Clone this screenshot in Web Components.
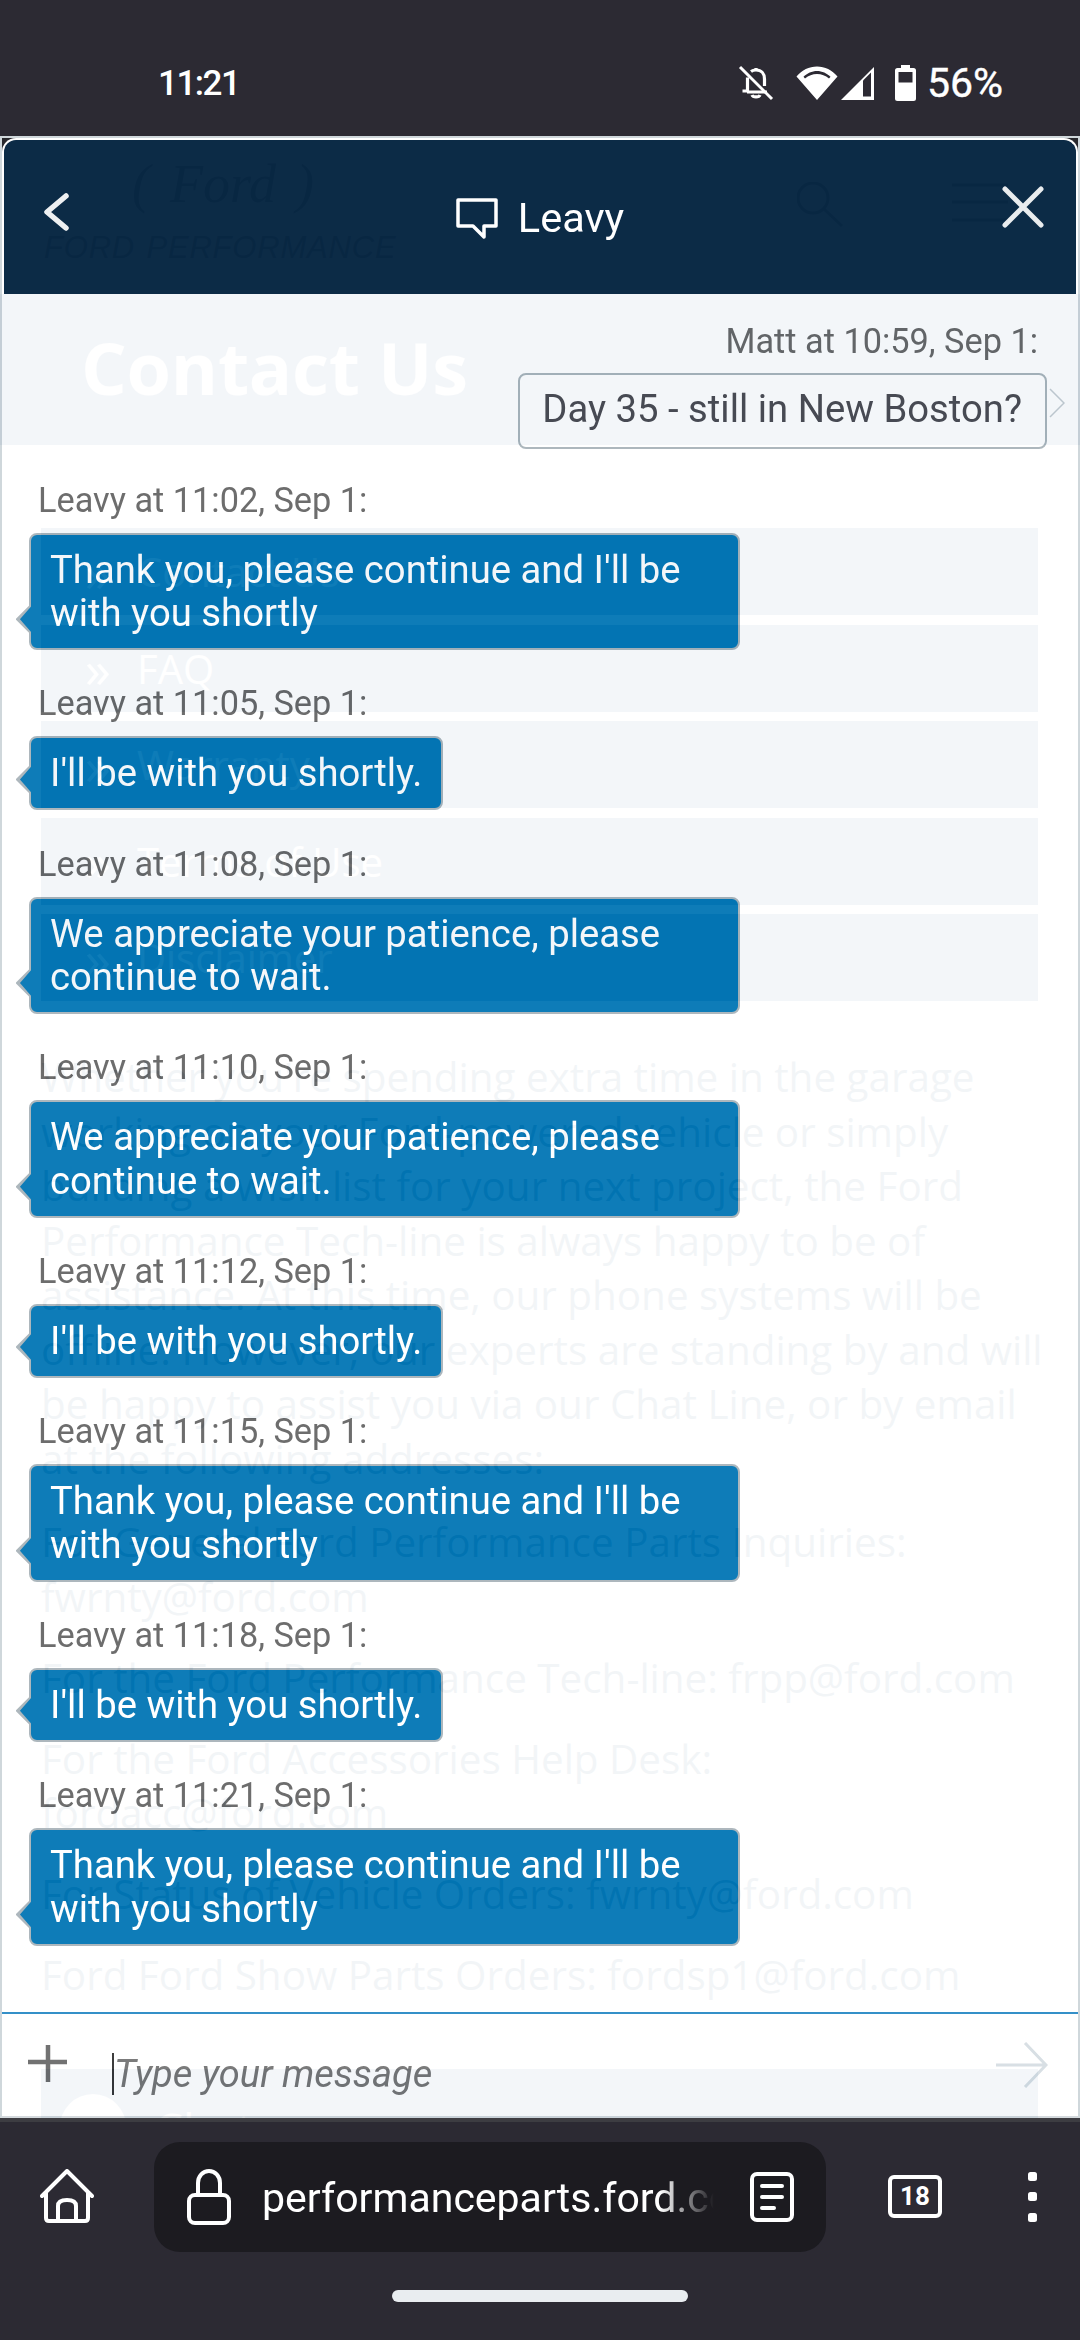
<!DOCTYPE html>
<html><head><meta charset="utf-8">
<style>
html,body{margin:0;padding:0;background:#2c2a33}
</style></head>
<body>
<phone-app></phone-app>
<script>
function def(name, css, html){
  customElements.define(name, class extends HTMLElement{
    constructor(){super();const r=this.attachShadow({mode:'open'});
      r.innerHTML='<style>'+css+'</style>'+(typeof html==='function'?html(this):html);}
  });
}
def('status-bar',`
:host{display:flex;align-items:center;height:136px;box-sizing:border-box;padding:30px 77px 0 158px;background:#2c2a33;color:#fff;font-family:Roboto,sans-serif}
.t{font-size:35px;font-weight:500;flex:1;letter-spacing:-1.500px}
.i{display:flex;align-items:center}
svg{display:block}
.p{font-size:41px;font-weight:400;margin-left:11px;letter-spacing:0;-webkit-text-stroke:.4px #fff}
`,`<span class="t">11:21</span><div class="i">
<svg width="36" height="36" viewBox="0 0 36 36" fill="none" stroke="#fff" stroke-width="3.200"><path d="M18 3v3"/><path d="M9.500 12.500V26H4.500M13 6.500c1.300-1 3-1.500 5-1.500 5.500 0 8.500 4 8.500 9v7"/><path d="M9 27h20M14 30c1 2.500 7 2.500 8 0" /><path d="M2 2 34 34" stroke-width="3"/></svg>
<svg style="margin-left:22px" width="42" height="34" viewBox="0 0 42 34" fill="#fff"><path d="M21 34 .5 10.500C6 4 13 .5 21 .5s15 3.500 20.500 10L21 34ZM7.500 10.800 9 12.500C12.500 9.500 16.500 8 21 8s8.500 1.500 12 4.500l1.500-1.700C31 7.400 26 5 21 5S11 7.400 7.500 10.800Z" fill-rule="evenodd"/></svg>
<svg style="margin-left:3px" width="34" height="33" viewBox="0 0 34 33"><path d="M33 0V33H0Z" fill="#fff"/><path d="M22 13.500V29.500H30V5.500Z" fill="#2c2a33"/></svg>
<svg style="margin-left:20px" width="21" height="36" viewBox="0 0 21 36"><path d="M6 0h9v3h3.500A2.500 2.500 0 0 1 21 5.500V33.500A2.500 2.500 0 0 1 18.500 36H2.500A2.500 2.500 0 0 1 0 33.500V5.500A2.500 2.500 0 0 1 2.500 3H6Z" fill="#fff"/><rect x="3.500" y="7" width="14" height="10.500" fill="#2c2a33"/></svg>
<span class="p">56%</span></div>`);

def('page-row',`
:host{display:flex;align-items:center;height:87px;margin:0 42px 9.500px 41px;background:rgb(30,90,150);color:#fff;font:40px "Open Sans",sans-serif}
b{font-weight:400;width:52px;padding-left:44px;font-size:52px;line-height:40px}
`,`<b>»</b><slot></slot>`);

def('page-under',`
:host{display:block;height:100%;background:#fff;font-family:"Open Sans",sans-serif;color:rgb(0,60,110);overflow:hidden}
.hd{height:158px;box-sizing:border-box;position:relative;display:flex;padding:28px 0 0 44px;color:#aaa}
.logo{font:italic 54px "Liberation Serif",serif;display:flex;align-items:center;height:40px;gap:20px;margin-left:88px}
.perf{font:italic 400 31px "Liberation Sans",sans-serif;margin-top:78px;position:absolute;left:44px;top:16px;letter-spacing:.8px;word-spacing:2px}
.sr{position:absolute;left:797px;top:46px}
.hero{height:151px;background:rgb(30,90,150);color:#fff;font-size:72px;font-weight:700;box-sizing:border-box;padding:38px 0 0 81px;line-height:70px;margin-bottom:83px;letter-spacing:-.3px}
.txt{margin:26.500px 42px 0 41px;font-size:40.400px;line-height:54.500px;white-space:nowrap}
.chat{margin:66px 42px 0 41px;height:100px;background:rgb(30,90,150);display:flex;color:#fff;font-size:46px;padding:25px 0 0 19px;gap:28px;line-height:70px}
.c{width:66px;height:66px;border-radius:50%;background:#fff}
`,`<div class="hd"><div class="logo"><span>(</span><span>Ford</span><span>)</span></div><div class="perf">FORD PERFORMANCE</div>
<svg class="sr" height="50" viewBox="0 0 220 50" fill="none" stroke="#aaa" stroke-width="3" style="width:220px"><circle cx="16" cy="16" r="15"/><path d="M27 27 45 44"/><path d="M155 3h56M155 20h56M155 38h56"/></svg></div>
<div class="hero">Contact Us</div>
<page-row>Contact Us</page-row><page-row>FAQ</page-row><page-row>Warranty</page-row><page-row>Terms of Use</page-row><page-row>Disclaimer</page-row>
<div class="txt" style="margin-top:49px">Whether you're spending extra time in the garage<br>working on your Ford-powered vehicle or simply<br>building a wish list for your next project, the Ford<br>Performance Tech-line is always happy to be of<br>assistance. At this time, our phone systems will be<br>offline. However, our experts are standing by and will<br>be happy to assist you via our Chat Line, or by email<br>at the following addresses:</div>
<div class="txt" style="margin-top:29px">For General Ford Performance Parts Inquiries:<br>fwrnty@ford.com</div>
<div class="txt">For the Ford Performance Tech-line: frpp@ford.com</div>
<div class="txt">For the Ford Accessories Help Desk:<br>fordacc@ford.com</div>
<div class="txt">For Status of Vehicle Orders: fwrnty@ford.com</div>
<div class="txt">Ford Ford Show Parts Orders: fordsp1@ford.com</div>
<div class="chat"><div class="c"></div><span>Chat</span></div>`);

def('chat-msg',`
:host{display:block;font-family:Roboto,sans-serif}
:host([me]){margin-bottom:-2.500px}
.l{font-size:34.300px;line-height:38px;color:#666;margin-left:36px;height:38px}
.b{position:relative;box-sizing:border-box;margin:14px 0 0 27px;width:fit-content;background:#0276b5;color:#fff;font-size:38.250px;line-height:43.500px;padding:14px 19px 12.500px 19px;border:2px solid #a9b4ba;border-radius:8px;max-width:711px}
.b::after{content:"";position:absolute;left:-15.500px;bottom:13.500px;width:15.500px;height:31px;background:#a9b4ba;clip-path:polygon(100% 0,0 50%,100% 100%)}
.b::before{content:"";position:absolute;z-index:1;left:-13px;bottom:14px;width:15px;height:30px;background:#0276b5;clip-path:polygon(100% 0,13% 50%,100% 100%)}
:host([me]) .l{text-align:right;margin:0 40px 0 0}
:host([me]) .b{background:#fff;color:#4a4a50;margin:13px 31px 0 auto;padding:13px 23px 15.500px 22px;max-width:none}
:host([me]) .b::before,:host([me]) .b::after{display:none}
:host([me]) svg{position:absolute;right:-20px;top:13px}
`,h=>`<div class="l">${h.getAttribute('who')}</div><div class="b"><slot></slot>${h.hasAttribute('me')?'<svg width="16" height="30" viewBox="0 0 16 30" fill="none" stroke="#c4ccd1" stroke-width="1.500"><path d="M1 1 15 15 1 29"/></svg>':''}</div>`);

def('chat-head',`
:host{display:block;background:#1d1d22}
.h{height:156px;background:#00203d;border-top:2px solid #fff;border-left:2px solid #fff;border-right:2px solid #fff;border-radius:14px 14px 0 0;box-sizing:border-box;position:relative;display:flex;justify-content:center;color:#fff;font:41.500px Roboto,sans-serif}
.m{display:flex;align-items:flex-start;padding-top:54px;gap:20px}
.bk{position:absolute;left:38px;top:52px}.x{position:absolute;right:32px;top:46px}
`,`<div class="h"><svg class="bk" width="28" height="40" viewBox="0 0 28 40" fill="none" stroke="#eef0f2" stroke-width="5.500" stroke-linecap="round" stroke-linejoin="round"><path d="M24 4 5 20 24 36"/></svg>
<div class="m"><svg width="42" height="41" viewBox="0 0 42 41" fill="none" stroke="#fff" stroke-width="3.500" stroke-linejoin="round" style="margin-top:4px"><path d="M2 2H40V28H28V39L17 28H2Z"/></svg><span style="line-height:48px">Leavy</span></div>
<svg class="x" width="42" height="42" viewBox="0 0 42 42" stroke="#e8ebee" stroke-width="5" stroke-linecap="round"><path d="M3 3 39 39M39 3 3 39"/></svg></div>`);

def('chat-input',`
:host{height:104px;background:#fff;border-top:2px solid #2a8bc6;position:relative;font-family:Roboto,sans-serif;display:flex;align-items:flex-start;box-sizing:border-box;padding:28px 0 0 26px}
.t{font-size:38px;font-style:italic;color:#747474;border-left:2px solid #333;line-height:42px;margin:11px 0 0 42px;padding-left:0;flex:1;height:42px}
svg.s{margin:0 30px 0 0}
`,`<svg width="42" height="42" viewBox="0 0 42 42" stroke="#6b6b6b" stroke-width="4.500"><path d="M20 3V40M0 20H39"/></svg><span class="t">Type your message</span>
<svg class="s" width="52" height="46" viewBox="0 0 52 46" fill="none" stroke="#d6dee3" stroke-width="3"><path d="M0 23H49M29 1 50 23 29 45"/></svg>`);

def('chat-window',`
:host{display:flex;flex-direction:column;position:absolute;inset:0;background:#fff;opacity:.95;border-left:2px solid #cdd5da;border-right:2px solid #cdd5da;border-bottom:2px solid #d2d8dc;border-top:2px solid #cdd5da;box-sizing:border-box}
.list{flex:1;display:flex;flex-direction:column;gap:34.200px;padding:28px 0 0;overflow:hidden;margin:0}
`,`<chat-head></chat-head><div class="list"><slot></slot></div><chat-input></chat-input>`);

def('browser-bar',`
:host{display:block;height:222px;background:#2c2a33;border-top:4px solid #3d3d42;box-sizing:border-box;color:#fff;font-family:Roboto,sans-serif}
.r{display:flex;align-items:center;height:110px;margin-top:20px;padding:0 0 0 40px}
.u{flex:none;width:672px;height:110px;border-radius:26px;background:#1c1b20;margin-left:60px;display:flex;align-items:center;box-sizing:border-box;padding-left:33px;position:relative}
.a{font-size:41px;margin-left:31px;width:452px;overflow:hidden;white-space:nowrap;-webkit-mask-image:linear-gradient(90deg,#000 88%,transparent 100%);mask-image:linear-gradient(90deg,#000 88%,transparent 100%);margin-top:2px;line-height:56px}
.d{margin-left:36px;flex:none}
.tab{flex:none;margin-left:62px;width:54px;height:43px;box-sizing:border-box;border:4px solid #fff;border-radius:6px;font-size:26px;font-weight:700;display:flex;align-items:center;justify-content:center;margin-top:-2px}
.k{margin-left:86px;flex:none}
.hb{height:12px;border-radius:6px;width:296px;background:#e9edf0;margin:38px auto 0}
`,`<div class="r"><svg width="54" height="54" viewBox="0 0 54 54" fill="none" stroke="#fff" stroke-width="4" stroke-linejoin="round" stroke-linecap="round" style="margin-top:-2px;flex:none"><path d="M2 27 27 2 52 27M6 23V49Q6 52 9 52H45Q48 52 48 49V23"/><path d="M18 52V37Q18 31 27 31T36 37V52"/></svg>
<div class="u"><svg width="44" height="56" viewBox="0 0 44 56" fill="none" stroke="#fff" stroke-width="4" style="flex:none"><rect x="2" y="26" width="40" height="28" rx="6"/><path d="M11 26V14C11 7 16 2 22 2S33 7 33 14V26"/></svg><span class="a">performanceparts.ford.com</span>
<svg class="d" width="44" height="50" viewBox="0 0 44 50" fill="none" stroke="#fff" stroke-width="4" stroke-linecap="round"><rect x="2" y="2" width="40" height="46" rx="5"/><path d="M12 14H32M12 25H32M12 36H24"/></svg></div>
<div class="tab">18</div>
<svg class="k" width="10" height="50" viewBox="0 0 10 50" fill="#fff"><rect y="0" width="9" height="9" rx="2.500"/><rect y="20" width="9" height="9" rx="2.500"/><rect y="41" width="9" height="9" rx="2.500"/></svg></div>
<div class="hb"></div>`);

def('phone-app',`
:host{display:flex;flex-direction:column;width:1080px;height:2340px;overflow:hidden}
.v{position:relative;height:1982px;overflow:hidden}
`,`<status-bar></status-bar><div class="v"><page-under></page-under>
<chat-window>
<chat-msg me who="Matt at 10:59, Sep 1:">Day 35 - still in New Boston?</chat-msg>
<chat-msg who="Leavy at 11:02, Sep 1:">Thank you, please continue and I'll be with you shortly</chat-msg>
<chat-msg who="Leavy at 11:05, Sep 1:">I'll be with you shortly.</chat-msg>
<chat-msg who="Leavy at 11:08, Sep 1:">We appreciate your patience, please continue to wait.</chat-msg>
<chat-msg who="Leavy at 11:10, Sep 1:">We appreciate your patience, please continue to wait.</chat-msg>
<chat-msg who="Leavy at 11:12, Sep 1:">I'll be with you shortly.</chat-msg>
<chat-msg who="Leavy at 11:15, Sep 1:">Thank you, please continue and I'll be with you shortly</chat-msg>
<chat-msg who="Leavy at 11:18, Sep 1:">I'll be with you shortly.</chat-msg>
<chat-msg who="Leavy at 11:21, Sep 1:">Thank you, please continue and I'll be with you shortly</chat-msg>
</chat-window></div><browser-bar></browser-bar>`);
</script>
</body></html>
